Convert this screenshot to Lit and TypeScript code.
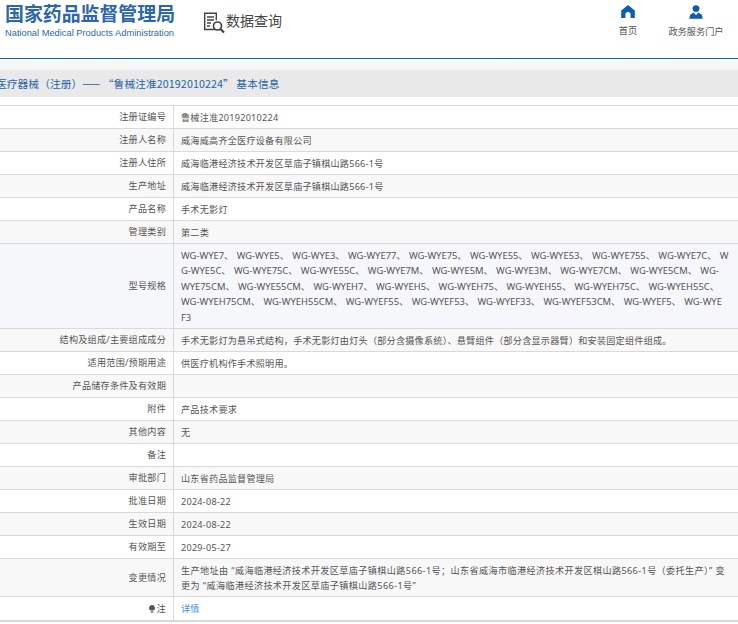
import { customElement } from "lit/decorators.js";
import { css, html, LitElement } from "lit";

const addr = "威海临港经济技术开发区草庙子镇棋山路566-1号";

// the source wraps these mid-word, so each shown line is kept as is
const modelLines = [
  ["WG-WYE7、", "WG-WYE5、", "WG-WYE3、", "WG-WYE77、", "WG-WYE75、", "WG-WYE55、", "WG-WYE53、", "WG-WYE755、", "WG-WYE7C、", "W"],
  ["G-WYE5C、", "WG-WYE75C、", "WG-WYE55C、", "WG-WYE7M、", "WG-WYE5M、", "WG-WYE3M、", "WG-WYE7CM、", "WG-WYE5CM、", "WG-"],
  ["WYE75CM、", "WG-WYE55CM、", "WG-WYEH7、", "WG-WYEH5、", "WG-WYEH75、", "WG-WYEH55、", "WG-WYEH75C、", "WG-WYEH55C、"],
  ["WG-WYEH75CM、", "WG-WYEH55CM、", "WG-WYEF55、", "WG-WYEF53、", "WG-WYEF33、", "WG-WYEF53CM、", "WG-WYEF5、", "WG-WYE"],
  ["F3"],
];

const rows: { label: string; value?: string; cls?: string }[] = [
  { label: "注册证编号", value: "鲁械注准20192010224" },
  { label: "注册人名称", value: "威海威高齐全医疗设备有限公司" },
  { label: "注册人住所", value: addr },
  { label: "生产地址", value: addr },
  { label: "产品名称", value: "手术无影灯" },
  { label: "管理类别", value: "第二类" },
  { label: "型号规格", cls: "tall" },
  { label: "结构及组成/主要组成成分", value: "手术无影灯为悬吊式结构，手术无影灯由灯头（部分含摄像系统）、悬臂组件（部分含显示器臂）和安装固定组件组成。" },
  { label: "适用范围/预期用途", value: "供医疗机构作手术照明用。" },
  { label: "产品储存条件及有效期" },
  { label: "附件", value: "产品技术要求" },
  { label: "其他内容", value: "无" },
  { label: "备注" },
  { label: "审批部门", value: "山东省药品监督管理局" },
  { label: "批准日期", value: "2024-08-22" },
  { label: "生效日期", value: "2024-08-22" },
  { label: "有效期至", value: "2029-05-27" },
  {
    label: "变更情况",
    cls: "change",
    value:
      "生产地址由 “威海临港经济技术开发区草庙子镇棋山路566-1号；山东省威海市临港经济技术开发区棋山路566-1号（委托生产）” 变更为 “威海临港经济技术开发区草庙子镇棋山路566-1号”",
  },
];

@customElement("app-root")
export class AppRoot extends LitElement {
  render() {
    return html`
      <header class="top">
        <div class="brand">
          <div class="brand-cn">国家药品监督管理局</div>
          <div class="brand-en">National Medical Products Administration</div>
        </div>
        <div class="query">
          <svg width="23" height="22" viewBox="0 0 23 22" fill="none" stroke="#444">
            <path d="M12 17.5H1.7V1.2h11.6v7" stroke-width="1.4" />
            <path d="M4 5h7M4 8h7M4 11h4M4 14h3" stroke-width="1.3" />
            <circle cx="14.5" cy="14" r="4" stroke-width="1.7" />
            <path d="M17.5 17l3.5 3.5" stroke-width="2.2" />
          </svg>
          <span>数据查询</span>
        </div>
        <nav class="nav">
          <a class="nav-item home">
            <svg width="14" height="13" viewBox="0 0 14 13" fill="#0f5cb0">
              <path d="M7 0 13.8 5.6V13H9.6V9.6A2.6 2.6 0 0 0 4.4 9.6V13H.2V5.6Z" />
            </svg>
            <span>首页</span>
          </a>
          <a class="nav-item portal">
            <svg width="14" height="14" viewBox="0 0 14 14" fill="#0f5cb0">
              <circle cx="7" cy="3.6" r="3.4" />
              <path d="M.2 13.8 1.4 9.6 4.8 7.6 7 10.2 9.2 7.6 12.6 9.6 13.8 13.8Z" />
            </svg>
            <span>政务服务门户</span>
          </a>
        </nav>
      </header>
      <div class="band"></div>
      <h2 class="title"><span>医疗器械（注册）—— “鲁械注准20192010224” 基本信息</span></h2>
      <div class="table">
        ${rows.map(
          (r) => html`
            <div class="row ${r.cls ?? ""}">
              <div class="label">${r.label}</div>
              <div class="value">
                ${r.cls === "tall"
                  ? modelLines.map(
                      (line) => html`<div class="model-line">${line.map((m) => html`<span class="model">${m}</span>`)}</div>`,
                    )
                  : (r.value ?? "")}
              </div>
            </div>
          `,
        )}
        <div class="row last">
          <div class="label">
            <svg class="bulb" width="6" height="8" viewBox="0 0 6 8" fill="#555">
              <path d="M3 0a3 3 0 0 1 1.6 5.5H1.4A3 3 0 0 1 3 0Z" />
              <rect x="1.7" y="6.4" width="2.6" height="1.2" />
            </svg>
            注
          </div>
          <div class="value"><a class="link">详情</a></div>
        </div>
      </div>
    `;
  }

  static styles = css`
    :host {
      display: block;
      width: 738px;
      height: 624px;
      overflow: hidden;
      background: #fff;
      font-family: "Noto Sans", "Noto Sans CJK SC", sans-serif;
      color: #555;
    }
    .top {
      display: flex;
      align-items: flex-start;
      height: 58px;
      border-bottom: 1px solid #1f6299;
    }
    .brand {
      width: 203px;
      padding: 1px 0 0 5px;
      box-sizing: border-box;
    }
    .brand-cn {
      font-family: "Noto Sans CJK SC", sans-serif;
      font-weight: 700;
      font-size: 18.9px;
      line-height: 23px;
      color: #2b66ae;
      white-space: nowrap;
    }
    .brand-en {
      font-family: "Liberation Sans", sans-serif;
      font-size: 9.3px;
      line-height: 12px;
      margin-top: 3px;
      color: #2b6aa8;
      white-space: nowrap;
    }
    .query {
      display: flex;
      align-items: center;
      padding-top: 9px;
      font-family: "Noto Sans CJK SC", sans-serif;
      font-size: 14px;
      color: #444;
    }
    .query svg {
      margin-top: 3px;
    }
    .query span {
      margin-top: -4px;
    }
    .nav {
      margin-left: auto;
      display: flex;
      padding: 5px 11px 0 0;
    }
    .nav-item {
      display: flex;
      flex-direction: column;
      align-items: center;
      gap: 6px;
      font-size: 9.2px;
      line-height: 12px;
      color: #555;
      font-family: "Noto Sans CJK SC", sans-serif;
    }
    .nav-item svg {
      display: block;
    }
    .home {
      width: 40px;
      margin-right: 17px;
    }
    .portal {
      width: 62px;
    }
    .band {
      height: 11px;
      background: linear-gradient(#f7f9fa, #f6f6f6);
    }
    .title {
      margin: 0 0 8px;
      height: 27px;
      background: #e9e9e9;
      overflow: hidden;
      display: flex;
      align-items: center;
      font-family: "Noto Sans CJK SC", sans-serif;
      font-weight: 400;
      font-size: 10.7px;
      letter-spacing: 0.1px;
      color: #1e64a8;
      white-space: nowrap;
    }
    .title span {
      margin-left: -4px;
    }
    .table {
      border-top: 1px solid #d9d9d9;
      font-size: 9.1px;
      letter-spacing: 0.25px;
    }
    .row {
      display: grid;
      grid-template-columns: 174px 1fr;
      min-height: 22px;
      border-bottom: 1px solid #d9d9d9;
      line-height: 15.4px;
    }
    .row:nth-child(even) {
      background: #f8f8f8;
    }
    .row.tall {
      background: #f5f7fb;
    }
    .label {
      display: flex;
      align-items: center;
      justify-content: flex-end;
      padding-right: 7px;
      border-right: 1px solid #d9d9d9;
      white-space: nowrap;
    }
    .value {
      padding: 4px 7px 2.6px 7px;
      word-break: break-all;
    }
    .row.tall .value {
      font-size: 9.4px;
      letter-spacing: 0;
    }
    .model-line {
      white-space: nowrap;
    }
    .model {
      padding-right: 3.2px;
    }
    .row.change .value {
      letter-spacing: 0.4px;
    }
    .row.last {
      min-height: 23px;
      border-bottom-width: 2px;
      background: #fff;
    }
    .bulb {
      margin-right: 2px;
    }
    .link {
      color: #3f8fdf;
    }
  `;
}
